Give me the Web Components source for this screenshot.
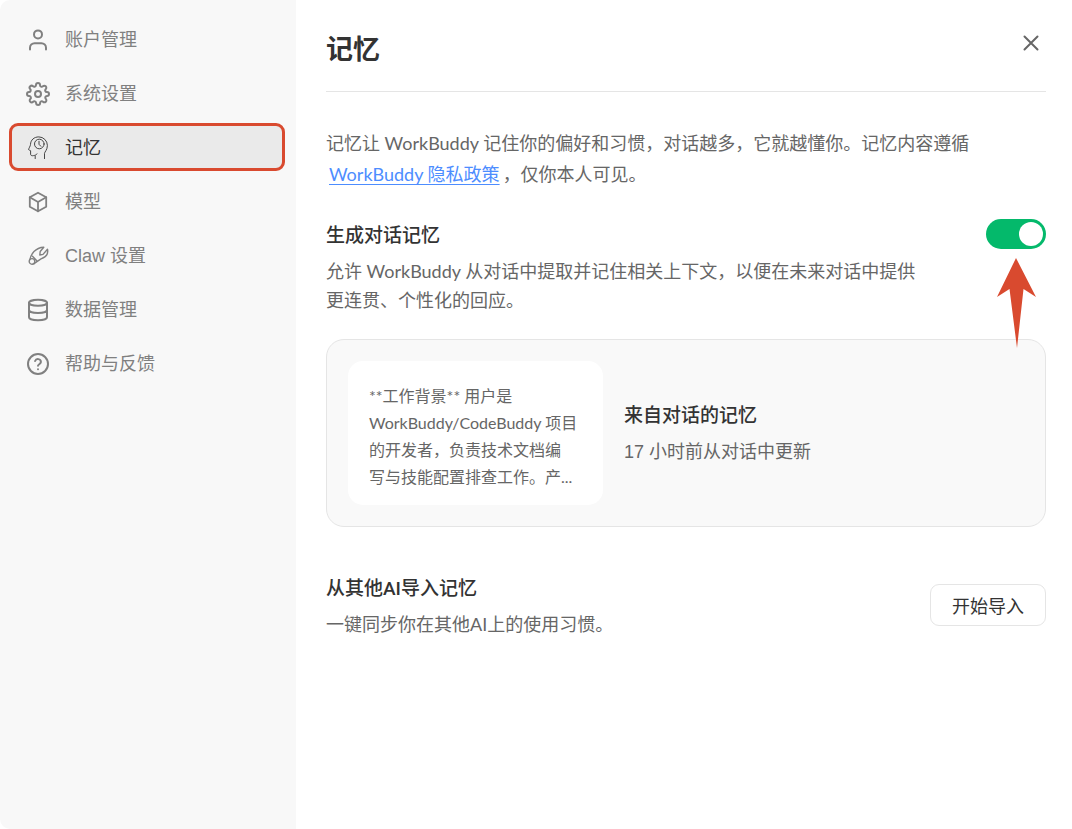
<!DOCTYPE html>
<html lang="zh-CN">
<head>
<meta charset="UTF-8">
<meta name="viewport" content="width=device-width, initial-scale=1">
<title>记忆</title>
<style>
  body {
    margin: 0;
    background: #fff;
    color: #666;
    font-family: Lato, "Noto Sans CJK SC", sans-serif;
    font-size: 18px;
  }
</style>
</head>
<body>
<settings-page></settings-page>

<script>
const ICONS = {
  user: '<g stroke-width="2"><circle cx="12" cy="6.400" r="4"/><path d="M4 21.500v-1.700a4.600 4.600 0 0 1 4.600-4.600h6.800a4.600 4.600 0 0 1 4.600 4.600v1.700"/></g>',
  gear: '<g stroke-width="2"><circle cx="12" cy="12" r="3"/><path d="M19.4 15a1.65 1.65 0 0 0 .33 1.82l.06.06a2 2 0 1 1-2.83 2.83l-.06-.06a1.65 1.65 0 0 0-2.8 1.17V21a2 2 0 0 1-4 0v-.09A1.65 1.65 0 0 0 9 19.4a1.65 1.65 0 0 0-1.82.33l-.06.06a2 2 0 1 1-2.83-2.83l.06-.06A1.65 1.65 0 0 0 3.18 14H3a2 2 0 0 1 0-4h.09A1.65 1.65 0 0 0 4.6 9a1.65 1.65 0 0 0-.33-1.82l-.06-.06a2 2 0 1 1 2.83-2.83l.06.06A1.65 1.65 0 0 0 9 4.6 1.65 1.65 0 0 0 10 3.09V3a2 2 0 0 1 4 0v.09a1.65 1.65 0 0 0 2.82 1.25l.06-.06a2 2 0 1 1 2.83 2.83l-.06.06A1.65 1.65 0 0 0 20.91 10H21a2 2 0 0 1 0 4h-.09A1.65 1.65 0 0 0 19.4 15z"/></g>',
  memory: '<g stroke-width="0.900"><path d="M18.500 22.600v-5.200c0-1.400 2.900-3.400 2.900-8A8.700 8.700 0 0 0 12.800.9C8 .9 4.700 4 4.500 8.400 4.500 10 2.500 12.800 2.600 13.600c.1.7 2 .7 2 1.100v3.600c0 1.400 1.700 1.600 3 1.300 1.600-.3 3-.8 3.400-1.700"/><path d="M9.200 20v2.600"/><circle cx="13.300" cy="8" r="4.800"/><path d="M13 5.300v3l1.900 2"/></g>',
  cube: '<g stroke-width="1.800"><path d="M12 2.700 20.200 7.300v9.400L12 21.300 3.800 16.700V7.300z"/><path d="M3.800 7.300 12 12l8.200-4.700M12 12v9.300"/></g>',
  claw: '<g stroke-width="1.400"><circle cx="6" cy="17.400" r="2.800"/><path d="M4 15.200C5 10.500 9 3.500 17.800 3.200l-3.600 4.300-.4 3.500 3.200-.6 4.500-5.200c.9 4.300-1.300 8-6.500 9.700L8 19.600"/><path d="M6.500 12.200 11 17"/></g>',
  database: '<g stroke-width="2"><ellipse cx="12" cy="4.800" rx="9" ry="3"/><path d="M3 4.800v14.400c0 1.700 4 3 9 3s9-1.300 9-3V4.800M3 12c0 1.700 4 3 9 3s9-1.300 9-3"/></g>',
  help: '<g stroke-width="2"><circle cx="12" cy="12" r="10"/><path d="M9.100 9a3 3 0 0 1 5.800 1c0 2-2.900 2.300-2.900 3.800"/><path d="M12 17.200v.1"/></g>',
  close: '<path stroke-width="2" d="m5.500 5.500 13 13M18.500 5.500l-13 13"/>'
};

class UiIcon extends HTMLElement {
  connectedCallback() {
    this.attachShadow({ mode: 'open' }).innerHTML = `
      <style>
        :host { display: block; width: 24px; height: 24px; }
        svg { display: block; width: 100%; height: 100%; fill: none; stroke: currentColor; stroke-linecap: round; stroke-linejoin: round; }
      </style>
      <svg viewBox="0 0 24 24" aria-hidden="true">${ICONS[this.getAttribute('name')]}</svg>
    `;
  }
}
customElements.define('ui-icon', UiIcon);

class NavItem extends HTMLElement {
  connectedCallback() {
    this.attachShadow({ mode: 'open' }).innerHTML = `
      <style>
        :host { display: block; color: #808080; }
        button {
          display: flex;
          align-items: center;
          gap: 15px;
          box-sizing: border-box;
          width: 100%;
          height: 48px;
          padding: 0 14px 2px;
          border: 3px solid transparent;
          border-radius: 9px;
          background: none;
          color: inherit;
          font: inherit;
          cursor: pointer;
        }
        ui-icon { padding-top: 4px; }
        :host([active]) { color: #333; }
        :host([active]) button { background: #eaeaea; border-color: #d94a2f; }
      </style>
      <button type="button"><ui-icon name="${this.getAttribute('icon')}"></ui-icon><slot></slot></button>
    `;
  }
}
customElements.define('nav-item', NavItem);

class SideNav extends HTMLElement {
  connectedCallback() {
    this.attachShadow({ mode: 'open' }).innerHTML = `
      <style>
        :host {
          display: block;
          box-sizing: border-box;
          padding: 15px 11px 15px 9px;
          border-radius: 10px 0 0 10px;
          background: #f8f8f8;
          font-family: "Liberation Sans", "Noto Sans CJK SC", sans-serif;
        }
        nav { display: flex; flex-direction: column; gap: 6px; }
      </style>
      <nav><slot></slot></nav>
    `;
  }
}
customElements.define('side-nav', SideNav);

class PanelHeader extends HTMLElement {
  connectedCallback() {
    this.attachShadow({ mode: 'open' }).innerHTML = `
      <style>
        :host {
          display: flex;
          justify-content: space-between;
          align-items: flex-start;
          padding: 28px 0 21px;
          border-bottom: 1px solid #e5e5e5;
        }
        h1 { margin: 0; color: #333; font-size: 27px; line-height: 42px; font-weight: 700; }
        button { padding: 3px; border: 0; background: none; color: #666; cursor: pointer; }
      </style>
      <h1><slot></slot></h1>
      <button type="button" aria-label="关闭"><ui-icon name="close"></ui-icon></button>
    `;
  }
}
customElements.define('panel-header', PanelHeader);

// Title and description on the left, a control on the right
class SettingRow extends HTMLElement {
  connectedCallback() {
    this.attachShadow({ mode: 'open' }).innerHTML = `
      <style>
        :host { display: flex; justify-content: space-between; align-items: flex-start; }
        .text { max-width: 600px; }
        h2 { margin: 0 0 5px; color: #333; font-family: Roboto, "Noto Sans CJK SC", sans-serif; font-size: 19px; line-height: 33px; font-weight: 500; }
        p { margin: 0; line-height: 29px; }
      </style>
      <div class="text">
        <h2>${this.getAttribute('heading')}</h2>
        <p><slot></slot></p>
      </div>
      <slot name="control"></slot>
    `;
  }
}
customElements.define('setting-row', SettingRow);

class ToggleSwitch extends HTMLElement {
  connectedCallback() {
    this.attachShadow({ mode: 'open' }).innerHTML = `
      <style>
        :host { display: block; position: relative; }
        input {
          appearance: none;
          display: flex;
          align-items: center;
          box-sizing: border-box;
          width: 60px;
          height: 30px;
          margin: 0;
          padding: 3px;
          border-radius: 15px;
          background: #ccc;
          cursor: pointer;
        }
        input::before { content: ""; width: 24px; height: 24px; border-radius: 50%; background: #fff; }
        input:checked { justify-content: flex-end; background: #04b96b; }
        svg { position: absolute; top: 39px; left: 10px; width: 40px; height: 90px; fill: #d94a2f; }
      </style>
      <input type="checkbox" role="switch" aria-label="${this.getAttribute('label')}" checked>
      <svg viewBox="0 0 40 90" aria-hidden="true"><path d="M20 0 40 39 27.500 31 21 90 13.500 31 1 39z"/></svg>
    `;
  }
}
customElements.define('toggle-switch', ToggleSwitch);

class MemoryCard extends HTMLElement {
  connectedCallback() {
    this.attachShadow({ mode: 'open' }).innerHTML = `
      <style>
        :host {
          display: flex;
          align-items: center;
          gap: 21px;
          padding: 21px;
          border: 1px solid #e5e5e5;
          border-radius: 18px;
          background: #f9f9f9;
        }
        .preview {
          box-sizing: border-box;
          width: 255px;
          padding: 21px 20px 15px 21px;
          border-radius: 15px;
          background: #fff;
          font-size: 16px;
          line-height: 27px;
        }
        h3 { margin: 0 0 8px; color: #333; font-size: 19px; line-height: 30px; font-weight: 500; }
        p { margin: 0; font-family: "Liberation Sans", "Noto Sans CJK SC", sans-serif; line-height: 29px; }
      </style>
      <div class="preview"><slot></slot></div>
      <div>
        <h3>${this.getAttribute('heading')}</h3>
        <p>${this.getAttribute('updated')}</p>
      </div>
    `;
  }
}
customElements.define('memory-card', MemoryCard);

class OutlineButton extends HTMLElement {
  connectedCallback() {
    this.attachShadow({ mode: 'open' }).innerHTML = `
      <style>
        :host { display: block; padding-top: 12px; }
        button {
          height: 42px;
          padding: 0 21px;
          border: 1px solid #e5e5e5;
          border-radius: 9px;
          background: #fff;
          color: #333;
          font: inherit;
          cursor: pointer;
        }
      </style>
      <button type="button"><slot></slot></button>
    `;
  }
}
customElements.define('outline-button', OutlineButton);

class SettingsPage extends HTMLElement {
  connectedCallback() {
    this.attachShadow({ mode: 'open' }).innerHTML = `
      <style>
        :host { display: grid; grid-template-columns: 296px 1fr; min-height: 100vh; }
        main { padding: 0 26px 30px 30px; }
        .intro { margin: 36px 0 29px; line-height: 31px; }
        a { margin: 0 3px; color: #4d8dff; text-decoration: underline; text-underline-offset: 3px; }
        memory-card { margin: 24px 0 45px; }
      </style>
      <side-nav>
        <nav-item icon="user">账户管理</nav-item>
        <nav-item icon="gear">系统设置</nav-item>
        <nav-item icon="memory" active>记忆</nav-item>
        <nav-item icon="cube">模型</nav-item>
        <nav-item icon="claw">Claw 设置</nav-item>
        <nav-item icon="database">数据管理</nav-item>
        <nav-item icon="help">帮助与反馈</nav-item>
      </side-nav>
      <main>
        <panel-header>记忆</panel-header>
        <p class="intro">记忆让 WorkBuddy 记住你的偏好和习惯，对话越多，它就越懂你。记忆内容遵循 <a href="#privacy">WorkBuddy 隐私政策</a>，仅你本人可见。</p>
        <setting-row heading="生成对话记忆">
          允许 WorkBuddy 从对话中提取并记住相关上下文，以便在未来对话中提供更连贯、个性化的回应。
          <toggle-switch slot="control" label="生成对话记忆"></toggle-switch>
        </setting-row>
        <memory-card heading="来自对话的记忆" updated="17 小时前从对话中更新">**工作背景** 用户是 WorkBuddy/CodeBuddy 项目的开发者，负责技术文档编<br>写与技能配置排查工作。产...</memory-card>
        <setting-row heading="从其他AI导入记忆">
          一键同步你在其他AI上的使用习惯。
          <outline-button slot="control">开始导入</outline-button>
        </setting-row>
      </main>
    `;
  }
}
customElements.define('settings-page', SettingsPage);
</script>
</body>
</html>
